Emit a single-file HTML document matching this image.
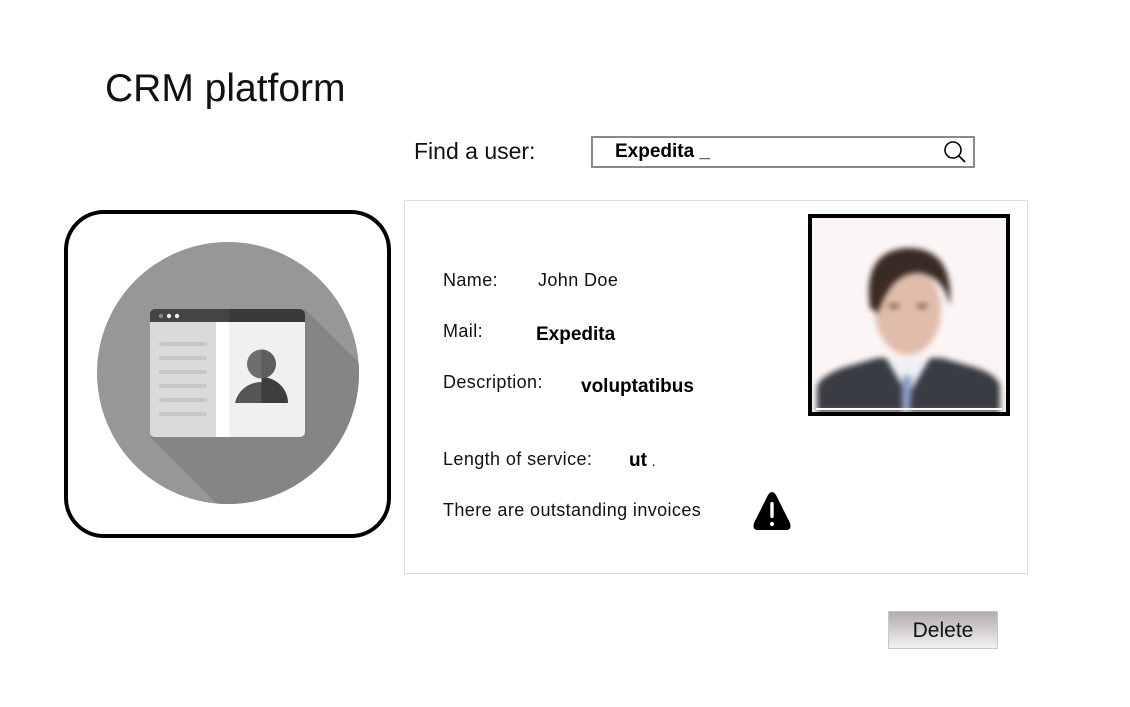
<!DOCTYPE html>
<html><head><meta charset="utf-8"><style>
body{margin:0;width:1130px;height:707px;background:#fff;position:relative;overflow:hidden;font-family:"Liberation Sans",sans-serif;color:#111}
.a{position:absolute;white-space:nowrap}
.l{font-size:18px;letter-spacing:0.4px}
.b{font-weight:bold;font-size:19px;color:#000}
</style></head><body>
<div class="a" style="left:105px;top:67px;font-size:39px">CRM platform</div>
<div class="a" style="left:414px;top:138px;font-size:23px">Find a user:</div>
<div class="a" style="left:591px;top:136px;width:380px;height:28px;border:2px solid #8a8a8a"></div>
<div class="a b" style="left:615px;top:141px;font-size:19px">Expedita _</div>
<svg class="a" style="left:940px;top:139px" width="28" height="26" viewBox="0 0 28 26"><circle cx="13" cy="11" r="8" fill="none" stroke="#000" stroke-width="1.6"/><line x1="19" y1="17" x2="25" y2="23" stroke="#000" stroke-width="1.8"/></svg>

<div class="a" style="left:64px;top:210px;border:4px solid #000;border-radius:40px;box-sizing:border-box;width:327px;height:328px"></div>
<svg class="a" style="left:96px;top:241px" width="264" height="264" viewBox="0 0 264 264">
<defs><clipPath id="c"><circle cx="132" cy="132" r="131"/></clipPath></defs>
<circle cx="132" cy="132" r="131" fill="#979797"/>
<polygon clip-path="url(#c)" points="209,68 340,199 340,340 198,340 54,196" fill="#858585"/>
<rect x="54" y="68" width="155" height="128" rx="5" fill="#f0f0f0"/>
<path d="M54 81 H120 V196 H59 a5 5 0 0 1 -5 -5z" fill="#dadada"/>
<rect x="120" y="81" width="13" height="115" fill="#fff"/>
<path d="M59 68 H204 a5 5 0 0 1 5 5 V81 H54 V73 a5 5 0 0 1 5 -5z" fill="#3a3a3a"/>
<path d="M59 68 H133 V81 H54 V73 a5 5 0 0 1 5 -5z" fill="#444"/>
<circle cx="65" cy="75" r="2.2" fill="#888"/><circle cx="73" cy="75" r="2.2" fill="#eee"/><circle cx="81" cy="75" r="2.2" fill="#eee"/>
<g fill="#c6c6c6"><rect x="63" y="101" width="48" height="4" rx="2"/><rect x="63" y="115" width="48" height="4" rx="2"/><rect x="63" y="129" width="48" height="4" rx="2"/><rect x="63" y="143" width="48" height="4" rx="2"/><rect x="63" y="157" width="48" height="4" rx="2"/><rect x="63" y="171" width="48" height="4" rx="2"/></g>
<path d="M139 162 a27 26 0 0 1 53 0z" fill="#555"/>
<path d="M165.5 136 a27 26 0 0 1 26.5 26 H165.5z" fill="#3d3d3d"/>
<circle cx="165.5" cy="123" r="14.5" fill="#6e6e6e"/>
<path d="M165.5 108.5 a14.5 14.5 0 0 1 0 29z" fill="#5e5e5e"/>
</svg>

<div class="a" style="left:404px;top:200px;width:622px;height:372px;border:1px solid #ddd"></div>
<div class="a l" style="left:443px;top:270px">Name:</div>
<div class="a l" style="left:538px;top:270px">John Doe</div>
<div class="a l" style="left:443px;top:321px">Mail:</div>
<div class="a b" style="left:536px;top:324px">Expedita</div>
<div class="a l" style="left:443px;top:372px">Description:</div>
<div class="a b" style="left:581px;top:376px">voluptatibus</div>
<div class="a l" style="left:443px;top:449px">Length of service:</div>
<div class="a b" style="left:629px;top:450px">ut <span style="font-size:10px">.</span></div>
<div class="a l" style="left:443px;top:500px">There are outstanding invoices</div>
<svg class="a" style="left:752px;top:490px" width="40" height="42" viewBox="0 0 40 42"><path d="M20 2 Q22 2 24 5 L38 33 Q40 40 34 40 H6 Q0 40 2 33 L16 5 Q18 2 20 2z" fill="#000"/><rect x="18.3" y="12" width="3.4" height="16" rx="1.5" fill="#fff"/><circle cx="20" cy="34" r="2.1" fill="#fff"/></svg>

<div class="a" style="left:808px;top:214px;width:202px;height:202px;background:#000"></div>
<div class="a" style="left:812px;top:218px;width:194px;height:194px;background:#fbf6f5;overflow:hidden">
<svg width="194" height="194" viewBox="0 0 194 194">
<g style="filter:blur(3px)">
<path d="M5 170 Q5 160 30 150 L65 140 L130 140 L165 150 Q188 158 188 170 V194 H5z" fill="#3a3c44"/>
<path d="M74 140 L96 178 L118 140z" fill="#eef0f4"/>
<path d="M90 158 L100 158 L98 194 L90 194z" fill="#8ca0c8"/>
<ellipse cx="96" cy="92" rx="33" ry="45" fill="#e0bcaa"/>
<path d="M58 90 Q50 32 96 30 Q142 30 138 88 Q132 60 110 55 Q80 52 66 95z" fill="#3a2a24"/>
<ellipse cx="82" cy="88" rx="6" ry="2" fill="#6a4a40"/><ellipse cx="110" cy="88" rx="6" ry="2" fill="#6a4a40"/>
</g></svg></div>
<div class="a" style="left:816px;top:408px;width:186px;height:2px;background:#fff"></div>

<div class="a" style="left:888px;top:611px;width:110px;height:38px;border:1px solid #c8c8c8;background:linear-gradient(#b4acac,#f2f2f2);box-sizing:border-box;font-size:21px;text-align:center;line-height:37px;color:#111">Delete</div>
</body></html>
